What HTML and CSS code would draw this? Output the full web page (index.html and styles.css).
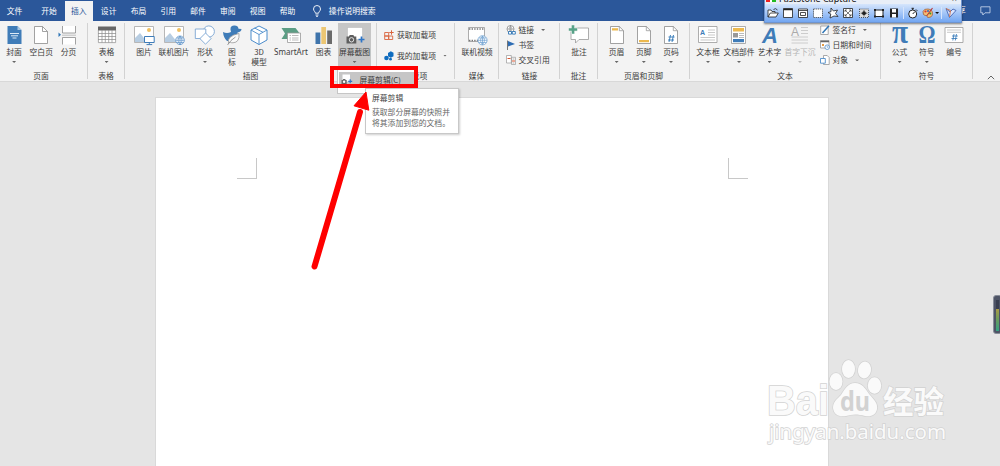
FILE: index.html
```html
<!DOCTYPE html>
<html lang="zh-CN">
<head>
    <meta charset="UTF-8">
    <meta name="viewport" content="width=device-width, initial-scale=1.0">
    <title>文档</title>
    <link rel="stylesheet" href="styles.css">
</head>
<body>
    <nav class="tabs">
        <span class="tab file">文件</span>
        <span class="tab">开始</span>
        <span class="tab active">插入</span>
        <span class="tab">设计</span>
        <span class="tab">布局</span>
        <span class="tab">引用</span>
        <span class="tab">邮件</span>
        <span class="tab">审阅</span>
        <span class="tab">视图</span>
        <span class="tab">帮助</span>
        <span class="search">
            <svg width="10" height="12" viewBox="0 0 10 12" fill="none" stroke="#fff" stroke-width=".9"><path d="M3.4 8.2C3.4 6.6 1.5 6 1.5 4a3.5 3.5 0 0 1 7 0c0 2-1.9 2.6-1.9 4.2zM3.5 10h3M4 11.3h2"/></svg>
            操作说明搜索
        </span>
        <span class="share">享</span>
        <svg class="comment" width="11" height="10" viewBox="0 0 11 10" fill="none" stroke="#cfdcf0" stroke-width=".8"><path d="M.8.8h9.200v6H5L2.800 9V6.800H.8z"/></svg>
    </nav>

    <section class="ribbon">
        <div class="group g-pages">
            <div class="items">
                <div class="btn w27">
                    <svg viewBox="0 0 22 20"><path d="M4.500 1h10l4 4v14h-14z" fill="#3f7cb8"/><path d="M14.500 1v4h4z" fill="#a9c8e4"/><path d="M7 8.500h9M8 10.800h7M9.500 13h4" stroke="#dceaf6"/></svg>
                    <span>封面</span><i class="caret"></i>
                </div>
                <div class="btn w27">
                    <svg viewBox="0 0 22 20"><path d="M4.500 1.500h8l5 5v12h-13z" fill="#fff" stroke="#8c8c8c" stroke-width=".8"/><path d="M12.500 1.500v5h5" fill="none" stroke="#8c8c8c" stroke-width=".8"/></svg>
                    <span>空白页</span>
                </div>
                <div class="btn w27">
                    <svg viewBox="0 0 22 20"><path d="M5.500 1v7h13V1M5.500 19.500v-7h13v7" fill="#fff" stroke="#8c8c8c" stroke-width=".8"/><path d="M5 10.200h14" stroke="#aaa" stroke-width=".7"/><path d="M1.500 7.500 4 9.800 1.500 12z" fill="#2e75b6"/></svg>
                    <span>分页</span>
                </div>
            </div>
            <div class="name">页面</div>
        </div>

        <div class="group g-table">
            <div class="items">
                <div class="btn w37">
                    <svg viewBox="0 0 22 20"><path d="M2 2h18v16H2z" fill="#fff"/><path d="M2 1.500h18v4H2z" fill="#666"/><path d="M2.400 5v12.600h17.200V5M6 5v12.500M9.300 5v12.500M12.700 5v12.500M16 5v12.500M2 8.500h18M2 11.500h18M2 14.500h18" fill="none" stroke="#8a8a8a" stroke-width=".7"/></svg>
                    <span>表格</span><i class="caret"></i>
                </div>
            </div>
            <div class="name">表格</div>
        </div>

        <div class="group g-illus">
            <div class="items">
                <div class="btn w26">
                    <svg viewBox="0 0 22 20"><path d="M1.500 1.500h19v16h-19z" fill="#fff" stroke="#a6a6a6" stroke-width=".8"/><circle cx="16" cy="5" r="2" fill="#f0c060"/><path d="M2 17v-4l5-5 7 9z" fill="#b7cde2"/><path d="M11.500 11.500h9.700v6h-9.700z" fill="#fff" stroke="#3f7cb8"/><path d="M16.300 17.500v2M13.500 19.600h5.700" stroke="#3f7cb8"/></svg>
                    <span>图片</span>
                </div>
                <div class="btn w34">
                    <svg viewBox="0 0 22 20"><path d="M1.500 1.500h19v16h-19z" fill="#fff" stroke="#a6a6a6" stroke-width=".8"/><circle cx="16" cy="5" r="2" fill="#f0c060"/><path d="M2 17v-4l5-5 7 9z" fill="#b7cde2"/><circle cx="17" cy="15.300" r="4.300" fill="#fff" stroke="#5b92c9" stroke-width=".8"/><path d="M17 11v8.600M12.700 15.300h8.600M13.500 13h7M13.500 17.500h7M17 11q-4 4.300 0 8.600q4-4.300 0-8.600" fill="none" stroke="#5b92c9" stroke-width=".7"/></svg>
                    <span>联机图片</span>
                </div>
                <div class="btn w28">
                    <svg viewBox="0 0 22 20"><g fill="#fff" stroke="#7ba5d3" stroke-width=".9"><circle cx="14.800" cy="6.500" r="5.600"/><path d="M1.300 4h10.500v9.500H1.300z"/><path d="m11.500 8 5.600 5.600-5.600 5.600-5.600-5.600z"/></g></svg>
                    <span>形状</span><i class="caret"></i>
                </div>
                <div class="btn w26">
                    <svg viewBox="0 0 22 20"><path d="M2 7q4 2 8 0Q8 1 13 .6q4-.3 4.500 3.200l3 .2q0 2.500-4 3.500 1 6-4 8.500H6Q2.500 13 2 7z" fill="#3f7cb8"/><path d="M7.500 18.500Q5.500 11 18 8.500q.8 9-6 9.300-2 .2-3-.8z" fill="#fafafa" stroke="#999" stroke-width=".8"/><path d="M6.500 20q3-5 8-8" fill="none" stroke="#888" stroke-width=".8"/></svg>
                    <span>图<br>标</span>
                </div>
                <div class="btn w28">
                    <svg viewBox="0 0 22 20"><path d="m11 1 8 4v10l-8 4.500L3 15V5z" fill="#fff" stroke="#4b8ccb" stroke-width="1"/><path d="m3 5 8 4.500L19 5M11 9.500v10M6.500 3l8.500 4.300" fill="none" stroke="#4b8ccb" stroke-width=".9"/></svg>
                    <span>3D<br>模型</span>
                </div>
                <div class="btn w36">
                    <svg viewBox="0 0 22 20"><path d="M1.500 3h14l3.500 4.500-3.500 6.500h-14L5 8.500z" fill="#5c9d84"/><path d="M7.500 8h13v9.500h-13z" fill="#fff" stroke="#999" stroke-width=".8"/><path d="M9.500 10.500H11M12 10.500h6.500M9.500 13H11M12 13h6.500M9.500 15H11M12 15h6.500" stroke="#aaa" stroke-width=".8"/></svg>
                    <span class="latin">SmartArt</span>
                </div>
                <div class="btn w29">
                    <svg viewBox="0 0 22 20"><path d="M2.500 7.500h4.800V19H2.500z" fill="#3f74ab"/><path d="M8.300 2H13v17H8.300z" fill="#ecc673"/><path d="M14.200 5.500H19V19h-4.800z" fill="#6b6b6b"/></svg>
                    <span>图表</span>
                </div>
                <div class="btn w33 pressed">
                    <svg viewBox="0 0 22 20"><path d="M3.500 2.500h15v12h-15z" fill="#fff" stroke="#aaa" stroke-width=".8" stroke-dasharray="1 1"/><path d="M2.500 11.500h2.300l1-1.500h3.500l1 1.500h2v7H2.500z" fill="#5e5e5e"/><circle cx="7.500" cy="14.800" r="2.200" fill="#5e5e5e" stroke="#fff" stroke-width=".8"/><path d="M17.500 11.500v6M14.500 14.500h6" stroke="#2e75c6" stroke-width="1.700"/></svg>
                    <span>屏幕截图</span><i class="caret"></i>
                </div>
            </div>
            <div class="name">插图</div>
        </div>

        <div class="group g-addins">
            <div class="rows wide">
                <div class="row"><svg viewBox="0 0 10 10"><path d="M.7 2.500h4v3.500h-4zM.7 6h4v3.500h-4zM4.700 6h4v3.500h-4z" fill="none" stroke="#d9633d" stroke-width=".9"/><path d="M7.500.3v4.400M5.300 2.500h4.400" stroke="#d9633d"/></svg>获取加载项</div>
                <div class="row"><svg viewBox="0 0 10 10"><path d="M4 2 6.800.3l2.700 1.500v3.400L6.800 6.700 4 5.200z" fill="#0f6cbf"/><circle cx="2.500" cy="7" r="2.300" fill="#0f6cbf"/><circle cx="6.500" cy="8.200" r="1.400" fill="#0f6cbf"/></svg>我的加载项<i class="caret"></i></div>
            </div>
            <div class="name">加载项</div>
        </div>

        <div class="group g-media">
            <div class="items">
                <div class="btn w44">
                    <svg viewBox="0 0 22 20"><path d="M2.500 2.500h16v14h-16z" fill="#fff" stroke="#8c8c8c" stroke-width=".7"/><path d="M3 4h15M3 15.500h15" stroke="#777" stroke-width="1.600" stroke-dasharray="1.400 1.200"/><circle cx="16.500" cy="15.300" r="4.600" fill="#fff" stroke="#6b9fd0" stroke-width=".8"/><path d="M16.500 11v8.600M12 15.300h9M13 13h7M13 17.500h7M16.500 11q-4 4.300 0 8.600q4-4.300 0-8.600" fill="none" stroke="#6b9fd0" stroke-width=".7"/></svg>
                    <span>联机视频</span>
                </div>
            </div>
            <div class="name">媒体</div>
        </div>

        <div class="group g-links">
            <div class="rows">
                <div class="row"><svg viewBox="0 0 10 10"><circle cx="4.500" cy="4" r="3.500" fill="#fff" stroke="#888" stroke-width=".8"/><path d="M1 4h7M4.500.5v7M4.500.5q-3 3.500 0 7q3-3.500 0-7" fill="none" stroke="#888" stroke-width=".6"/><path d="M2.500 6.500h3v2.600h-3zM6.300 6.500h3v2.600h-3z" fill="#fff" stroke="#2e75b6" stroke-width=".9"/></svg>链接<i class="caret"></i></div>
                <div class="row"><svg viewBox="0 0 10 10"><path d="M1.500.5v9.500" stroke="#777"/><path d="M2 1l7 3-7 2.500z" fill="#2e6db4"/></svg>书签</div>
                <div class="row"><svg viewBox="0 0 10 10"><path d="M.5.500h4.800v7.500H.5zM5.500 2.300h4v7.200h-4z" fill="#fff" stroke="#999" stroke-width=".7"/><path d="M1.500 3.500h3M6 6h3" stroke="#d9532c"/><path d="M6.500 4h2M6.500 8h2" stroke="#777" stroke-width=".6"/></svg>交叉引用</div>
            </div>
            <div class="name">链接</div>
        </div>

        <div class="group g-comment">
            <div class="items">
                <div class="btn w38">
                    <svg viewBox="0 0 22 20"><path d="M3 3h17.500v11.500H11L7.500 18v-3.500H3z" fill="#fff" stroke="#999" stroke-width=".8"/><path d="M5 0v9M.5 4.500h9" stroke="#f3f3f3" stroke-width="4"/><path d="M5 .3v8.400M.8 4.500h8.400" stroke="#58a288" stroke-width="2.600"/></svg>
                    <span>批注</span>
                </div>
            </div>
            <div class="name">批注</div>
        </div>

        <div class="group g-header">
            <div class="items">
                <div class="btn w27">
                    <svg viewBox="0 0 22 20"><path d="M4.500 1.500h8.800l4.200 4.200v12.800h-13z" fill="#fff" stroke="#8c8c8c" stroke-width=".8"/><path d="M13.300 1.500v4.200h4.200" fill="none" stroke="#8c8c8c" stroke-width=".7"/><path d="M6 3.200h6v2.300H6z" fill="#ecb94f"/></svg>
                    <span>页眉</span><i class="caret"></i>
                </div>
                <div class="btn w27">
                    <svg viewBox="0 0 22 20"><path d="M4.500 1.500h8.800l4.200 4.200v12.800h-13z" fill="#fff" stroke="#8c8c8c" stroke-width=".8"/><path d="M13.300 1.500v4.200h4.200" fill="none" stroke="#8c8c8c" stroke-width=".7"/><path d="M6 15h10v2.200H6z" fill="#ecb94f"/></svg>
                    <span>页脚</span><i class="caret"></i>
                </div>
                <div class="btn w27">
                    <svg viewBox="0 0 22 20"><path d="M4.500 1.500h8.800l4.200 4.200v12.800h-13z" fill="#fff" stroke="#8c8c8c" stroke-width=".8"/><path d="M13.300 1.500v4.200h4.200" fill="none" stroke="#8c8c8c" stroke-width=".7"/><path d="m10.500 10-1.500 7M13.500 10 12 17M8.500 12h6M8 15h6" stroke="#2e75b6" stroke-width=".9"/></svg>
                    <span>页码</span><i class="caret"></i>
                </div>
            </div>
            <div class="name">页眉和页脚</div>
        </div>

        <div class="group g-text">
            <div class="items">
                <div class="btn w30">
                    <svg viewBox="0 0 22 20"><path d="M1.500 1.500h18.500v16H1.500z" fill="#fff" stroke="#999" stroke-width=".8"/><text x="3" y="10" class="letter small">A</text><path d="M11 5h7M11 7.500h7M11 10h7M3.500 12.500H18M3.500 15H18" stroke="#bbb" stroke-width=".8"/></svg>
                    <span>文本框</span><i class="caret"></i>
                </div>
                <div class="btn w32">
                    <svg viewBox="0 0 22 20"><path d="M3.500 1.500h14v17h-14z" fill="#fff" stroke="#999" stroke-width=".8"/><path d="M5 3h11v3.500H5z" fill="#ecb94f"/><path d="M5 8h5v4.500H5z" fill="#999"/><path d="M11 8.500h5M11 10.500h5M11 12.500h5" stroke="#aaa" stroke-width=".8"/><path d="M5 14h11v3.200H5z" fill="#3f7cb8"/></svg>
                    <span>文档部件</span><i class="caret"></i>
                </div>
                <div class="btn w29">
                    <svg viewBox="0 0 22 20"><text x="3" y="17.500" class="letter wordart">A</text></svg>
                    <span>艺术字</span><i class="caret"></i>
                </div>
                <div class="btn w32 disabled">
                    <svg viewBox="0 0 22 20"><text x="2" y="11" class="letter drop">A</text><path d="M12 2.500h7M12 5.500h7M12 8.500h7M2.500 12h16.500M2.500 15h16.500M2.500 18h16.500" stroke="#ccc"/></svg>
                    <span>首字下沉</span><i class="caret"></i>
                </div>
                <div class="rows">
                    <div class="row"><svg viewBox="0 0 10 10"><path d="M.7 1h7.500v8.500H.7z" fill="#fff" stroke="#888" stroke-width=".7"/><path d="M2.500 8 9 .8" fill="none" stroke="#2e75b6" stroke-width="1.500"/></svg>签名行<i class="caret"></i></div>
                    <div class="row"><svg viewBox="0 0 10 10"><path d="M.5.500h8.500v7.500H.5z" fill="#fff" stroke="#888" stroke-width=".7"/><path d="M.5 1.500H9" stroke="#666" stroke-width="1.500"/><path d="M2 4h2v2H2z" fill="#e39b45"/><circle cx="7.200" cy="7.200" r="2.300" fill="#fff" stroke="#4f8dca" stroke-width=".8"/><path d="M7.200 5.800v1.500h1.200" fill="none" stroke="#4f8dca" stroke-width=".6"/></svg>日期和时间</div>
                    <div class="row"><svg viewBox="0 0 10 10"><path d="M3.500.5h3.700l2 2v7H3.500z" fill="#fff" stroke="#888" stroke-width=".7"/><path d="M.5 3.500h4.800v4.700H.5z" fill="#fff" stroke="#4f8dca" stroke-width=".9"/></svg>对象<i class="caret"></i></div>
                </div>
            </div>
            <div class="name">文本</div>
        </div>

        <div class="group g-symbols">
            <div class="items">
                <div class="btn w27">
                    <svg viewBox="0 0 22 20"><text x="3" y="17.500" class="letter symbol pi" textLength="16" lengthAdjust="spacingAndGlyphs">π</text></svg>
                    <span>公式</span><i class="caret"></i>
                </div>
                <div class="btn w27">
                    <svg viewBox="0 0 22 20"><text x="2.500" y="17.500" class="letter symbol" textLength="17" lengthAdjust="spacingAndGlyphs">Ω</text></svg>
                    <span>符号</span><i class="caret"></i>
                </div>
                <div class="btn w27">
                    <svg viewBox="0 0 22 20"><path d="M2 2.500h18v15H2z" fill="#fff" stroke="#999" stroke-width=".8"/><path d="M4 5h14M4 7.300h14" stroke="#bbb" stroke-width=".8"/><path d="m11 9-1.200 6.500M13.500 9l-1.200 6.500M9 11h5.800M8.500 13.500h5.800" stroke="#2e75b6" stroke-width=".8"/></svg>
                    <span>编号</span>
                </div>
            </div>
            <div class="name">符号</div>
        </div>
        <svg class="collapse" viewBox="0 0 8 5" fill="none" stroke="#555" stroke-width=".9"><path d="M.8 4.200 4 1l3.200 3.200"/></svg>
    </section>

    <main class="workspace">
        <div class="page">
            <i class="corner left"></i>
            <i class="corner right"></i>
        </div>
    </main>

    <div class="menu">
        <div class="menu-item">
            <svg width="12" height="11" viewBox="0 0 12 11"><path d="M1.500.5h7.500v7H1.500z" fill="#fff"/><path d="M.5 6h1.200l.6-1h1.800l.6 1h1v4H.5z" fill="#666"/><circle cx="3.100" cy="7.800" r="1.200" fill="#fff"/><path d="M9.200 5.300v4M7.200 7.300h4" stroke="#2e75c6" stroke-width="1.200"/></svg>
            <span>屏幕剪辑(<u>C</u>)</span>
        </div>
    </div>
    <div class="tooltip">
        <b>屏幕剪辑</b>
        <p>获取部分屏幕的快照并<br>将其添加到您的文档。</p>
    </div>
    <div class="highlight"></div>
    <svg class="arrow" viewBox="0 0 70 190"><path d="M13.500 176.500 59 22" stroke="#f00" stroke-width="6" stroke-linecap="round"/><path d="M65 2 67.800 20.200 53 15.800z" fill="#f00" stroke="#f00" stroke-width="1"/></svg>

    <div class="capture">
        <div class="capture-title"><i class="logo"></i><span>FastStone Capture</span><span class="close">×</span></div>
        <div class="capture-tools">
            <svg viewBox="0 0 12 12"><path d="M1 10V3h3l1 1.500h3V6M1 10l2.300-4h8L9 10z" fill="#fff" stroke="#222" stroke-width=".8"/><path d="M6.500 2.500q2-2 4 .5" fill="none" stroke="#222" stroke-width=".8"/></svg>
            <svg viewBox="0 0 12 12"><path d="M1.500 1.500h9v9h-9z" fill="#fff" stroke="#222" stroke-width=".8"/><path d="M1.500 2.500h9" stroke="#222" stroke-width="1.500"/></svg>
            <svg viewBox="0 0 12 12"><path d="M1.500 2h9v8.500h-9z" fill="#fff" stroke="#222" stroke-width=".8"/><path d="M1.500 3.500h9M3.500 5.500h5v3h-5z" fill="none" stroke="#222" stroke-width=".8"/></svg>
            <svg viewBox="0 0 12 12"><path d="M1.500 2h9v8.500h-9z" fill="#fff" stroke="#222" stroke-width=".7" stroke-dasharray="1.300 .8"/></svg>
            <svg viewBox="0 0 12 12"><path d="M4 1 6.500 4l4-1L8.500 6.500l2.500 3-4-.5L3 11l.8-4L1 5.500l3-.8z" fill="#fff" stroke="#222" stroke-width=".8"/></svg>
            <svg viewBox="0 0 12 12"><path d="M1.500 1.500h9v9h-9z" fill="#fff" stroke="#222" stroke-width=".8"/><path d="m3 3 6 6M9 3 3 9M3 5V3h2M7 3h2v2M3 7v2h2M7 9h2V7" fill="none" stroke="#222" stroke-width=".6"/></svg>
            <svg viewBox="0 0 12 12"><path d="M1.500 2h9v8.500h-9z" fill="#ddd" stroke="#222" stroke-width=".7" stroke-dasharray="1 1"/><circle cx="6" cy="6.200" r="1.900" fill="#222"/><path d="M6 3v6.500M2.800 6.200h6.500" stroke="#222" stroke-width=".7"/></svg>
            <svg viewBox="0 0 12 12"><path d="M2 3h8v6.500H2z" fill="#fff" stroke="#222"/><path d="M1 2h2v2H1zM9 2h2v2H9zM1 8.500h2v2H1zM9 8.500h2v2H9z" fill="#222"/></svg>
            <svg viewBox="0 0 12 12"><path d="M2 1.500h8v9H2z" fill="#222"/><path d="M4 2h4v3.500H4zM4 7h4v3.500H4z" fill="#fff"/></svg>
            <i class="sep"></i>
            <svg viewBox="0 0 12 12"><circle cx="5.700" cy="7" r="4" fill="#fff" stroke="#222"/><path d="M5.700 7 8 4.500M4.500 1.300h2.400M5.700 1.500V3M9 2.500l1.300 1.300" stroke="#222"/></svg>
            <svg viewBox="0 0 12 12"><path d="M1 4.500Q2 1.500 6 2q4.500.5 4.500 4.500T6 10.500Q4.500 10 5 8.500 3 9 1.500 7.500z" fill="#f4bd72" stroke="#9c552b" stroke-width=".7"/><circle cx="3.500" cy="4.500" r="1.100" fill="#d33"/><circle cx="6" cy="4" r="1" fill="#36b"/><circle cx="8.300" cy="6.500" r="1.100" fill="#393"/><path d="M5 8.500 10.500 1" stroke="#b33" stroke-width="1.100"/></svg>
            <i class="caret dark"></i>
            <i class="sep"></i>
            <svg viewBox="0 0 12 12"><path d="m1 1.500 3.500 9L11 3.500 8 2 5 5z" fill="#d9e5ff" stroke="#4565b2" stroke-width=".9"/><path d="m1 1.500 4.500 2L4.500 10" fill="none" stroke="#d07954"/></svg>
        </div>
    </div>

    <div class="dock"><i></i></div>

    <svg class="watermark" viewBox="0 0 200 100">
        <g class="mark">
            <text x="17" y="65" class="bai" textLength="62" lengthAdjust="spacingAndGlyphs">Bai</text>
            <ellipse cx="86" cy="31.500" rx="6.500" ry="8.500"/>
            <ellipse cx="98.500" cy="19" rx="6.500" ry="9"/>
            <ellipse cx="114.500" cy="20" rx="6.500" ry="8.500" transform="rotate(10 114.500 20)"/>
            <ellipse cx="124.500" cy="35.500" rx="6.700" ry="8.300"/>
            <path d="M105 33c7 0 10 5 14 11 5 6 9 9 8 15-1 6-6 8-12 7-7-2-13-2-19 0-7 1-12-1-13-8 0-6 4-9 8-13 4-6 7-12 14-12z"/>
            <text x="133" y="63" class="exp" textLength="61" lengthAdjust="spacingAndGlyphs">经验</text>
            <text x="19" y="89" class="url" textLength="177" lengthAdjust="spacingAndGlyphs">jingyan.baidu.com</text>
        </g>
        <text x="90" y="61" class="du" textLength="30" lengthAdjust="spacingAndGlyphs">du</text>
    </svg>
</body>
</html>
```
FILE: styles.css
```css
* {
    box-sizing: border-box;
}
body {
    margin: 0;
    width: 1000px;
    height: 466px;
    overflow: hidden;
    position: relative;
    display: flex;
    flex-direction: column;
    background-color: #e5e5e5;
    color: #3b3b3b;
    font-family: "Noto Sans CJK SC", sans-serif;
    font-size: 7.8px;
    line-height: 10px;
}
svg {
    display: block;
    flex: none;
    overflow: visible;
}

/* tab strip */
.tabs {
    height: 21px;
    flex: none;
    display: flex;
    align-items: stretch;
    background-color: #2b579a;
    color: #fff;
}
.tab {
    width: 29.8px;
    padding-top: 5.5px;
    text-align: center;
}
.file {
    width: 29px;
    margin-right: 5.2px;
}
.active {
    width: 28px;
    margin: 1px 0.9px 0;
    padding-top: 4.5px;
    background-color: #f3f3f3;
    color: #2b579a;
}
.search {
    display: flex;
    align-items: center;
    gap: 7px;
    margin-left: 9.5px;
}
.share {
    margin-left: auto;
    padding-top: 5px;
    width: 22px;
}
.comment {
    margin: 6px 9px 0 0;
}

/* ribbon */
.ribbon {
    height: 61px;
    flex: none;
    display: flex;
    position: relative;
    background-color: #f3f3f3;
    border-bottom: 1px solid #d8d8d8;
}
.group {
    flex: none;
    display: flex;
    flex-direction: column;
    margin: 2px 0;
    border-right: 1px solid #d2d2d2;
}
.items {
    display: flex;
    flex: none;
    height: 46px;
}
.name {
    flex: none;
    text-align: center;
    padding-top: 1.5px;
}
.g-pages { width: 88px; padding-left: 0.5px; }
.g-pages .name { width: 81px; }
.g-table { width: 37px; }
.g-illus { width: 252px; }
.g-illus .items { padding-left: 6px; }
.g-addins { width: 78px; }
.g-media { width: 44px; margin-right: 1px; }
.g-links { width: 60px; }
.g-comment { width: 38px; }
.g-header { width: 92px; }
.g-header .items { padding-left: 5px; }
.g-text { width: 191px; }
.g-text .items { padding-left: 3px; }
.g-symbols { width: 92px; }
.g-symbols .items { padding-left: 5px; }

.btn {
    flex: none;
    display: flex;
    flex-direction: column;
    align-items: center;
    padding-top: 2px;
    white-space: nowrap;
}
.btn svg {
    width: 22px;
    height: 20px;
    margin-bottom: 1.5px;
}
.btn span {
    text-align: center;
}
.latin {
    font-family: "Noto Sans", sans-serif;
    font-size: 8px;
}
.w26 { width: 26px; }
.w27 { width: 27.2px; }
.w28 { width: 28px; }
.w29 { width: 29px; }
.w30 { width: 30px; }
.w32 { width: 32px; }
.w33 { width: 33px; }
.w34 { width: 34px; }
.w36 { width: 36px; }
.w37 { width: 37px; }
.w38 { width: 38px; }
.w44 { width: 44px; }
.pressed {
    background-color: #c6c6c6;
}
.disabled {
    color: #b5b5b5;
}
.disabled .caret {
    opacity: 0.4;
}
.caret {
    flex: none;
    width: 4px;
    height: 2px;
    margin-top: 4.5px;
    background-color: #666;
    clip-path: polygon(0 0, 100% 0, 50% 100%);
}
.rows {
    flex: none;
    display: flex;
    flex-direction: column;
    height: 46px;
    padding: 2px 0 0 5.5px;
    gap: 5.2px;
}
.g-text .rows {
    padding-left: 3.5px;
}
.rows.wide {
    padding: 7px 0 0 7px;
    gap: 10.5px;
}
.row {
    flex: none;
    display: flex;
    align-items: center;
    height: 10px;
    gap: 3px;
    white-space: nowrap;
}
.row svg {
    width: 10px;
    height: 10px;
}
.row .caret {
    margin: 0 0 0 4px;
}
.letter {
    font-family: "Liberation Sans", sans-serif;
    font-weight: bold;
    fill: #3f7cb8;
}
.small {
    font-size: 7px;
}
.wordart {
    font-size: 22px;
    font-style: italic;
}
.drop {
    font-size: 12px;
    font-weight: normal;
    fill: #aaa;
}
.symbol {
    font-family: "Liberation Serif", serif;
    font-size: 25px;
}
.pi {
    font-size: 33px;
}
.collapse {
    width: 8px;
    height: 5px;
    margin: 54px 0 0 14px;
}

/* document */
.workspace {
    flex: 1;
    padding: 15px 171px 0 155px;
}
.page {
    height: 100%;
    display: flex;
    justify-content: space-between;
    padding: 60px 80px 0 81px;
    background-color: #fff;
    border: 1px solid #d9d9d9;
    border-bottom: 0;
}
.corner {
    width: 20px;
    height: 21px;
    border-bottom: 1px solid #c8c8c8;
}
.left {
    border-right: 1px solid #c8c8c8;
}
.right {
    border-left: 1px solid #c8c8c8;
}

/* screenshot menu */
.menu {
    position: absolute;
    left: 337px;
    top: 67px;
    width: 80px;
    height: 27px;
    padding: 4px 1px;
    background-color: #fff;
    border: 1px solid #c6c6c6;
}
.menu-item {
    display: flex;
    align-items: center;
    gap: 6.5px;
    height: 15px;
    padding-left: 2px;
    background-color: #c6c6c6;
    white-space: nowrap;
}
.tooltip {
    position: absolute;
    left: 365px;
    top: 88px;
    width: 94px;
    height: 46px;
    padding: 4px 6px;
    background-color: #fff;
    border: 1px solid #c8c8c8;
    box-shadow: 1px 1px 2px rgba(0, 0, 0, 0.2);
    color: #666;
    white-space: nowrap;
}
.tooltip b {
    display: block;
    font-weight: normal;
    color: #444;
}
.tooltip p {
    margin: 4px 0 0;
    line-height: 10.7px;
}
.highlight {
    position: absolute;
    left: 330px;
    top: 66px;
    width: 88px;
    height: 22px;
    border: 4px solid #f00;
}
.arrow {
    position: absolute;
    left: 301px;
    top: 90px;
    width: 70px;
    height: 190px;
}

/* floating capture bar */
.capture {
    position: absolute;
    left: 764px;
    top: -8px;
    width: 198px;
    height: 31px;
    border: 1px solid #6e94cf;
    background-color: #d8e6fa;
    box-shadow: 0 1px 2px rgba(0, 0, 0, 0.5);
}
.capture-title {
    display: flex;
    height: 11px;
    color: #111;
    font: 9px/11px "Noto Sans", sans-serif;
    background-color: #e8eef7;
}
.logo {
    width: 10px;
    height: 4px;
    margin: 5px 3px 0 1px;
    background: linear-gradient(90deg, #e22 45%, #fff 45%, #fff 60%, #2b2 60%);
}
.close {
    margin-left: auto;
    padding-right: 4px;
}
.capture-tools {
    display: flex;
    align-items: center;
    gap: 3.1px;
    height: 18px;
    padding-left: 2px;
    background: linear-gradient(#d5e5fc, #72a6f2);
}
.capture-tools svg {
    width: 12px;
    height: 12px;
}
.sep {
    width: 1px;
    height: 12px;
    background-color: #d7e5fb;
}
.dark {
    margin: 0 -1px 0 -2px;
    background-color: #111;
}

.dock {
    position: absolute;
    left: 993px;
    top: 295px;
    width: 9px;
    height: 39px;
    padding: 4px 0 0 2px;
    background-color: #4e5466;
    border: 1px solid #888d99;
    border-radius: 3px;
}
.dock i {
    display: block;
    width: 3px;
    height: 31px;
    background: linear-gradient(#393f50 30%, #a89b45 30%, #6f9c5b 60%, #35a184);
}

/* watermark */
.watermark {
    position: absolute;
    left: 750px;
    top: 350px;
    width: 200px;
    height: 100px;
}
.mark {
    fill: #fafafa;
    stroke: #d2d2d2;
    stroke-width: 1.5px;
    paint-order: stroke;
}
.bai {
    font: bold 42px "Liberation Sans", sans-serif;
}
.exp {
    font: bold 31px "Noto Sans CJK SC", sans-serif;
}
.url {
    font: 20px "Noto Sans", sans-serif;
}
.du {
    font: bold 26px "Noto Sans", sans-serif;
    fill: #d2d2d2;
}
```
